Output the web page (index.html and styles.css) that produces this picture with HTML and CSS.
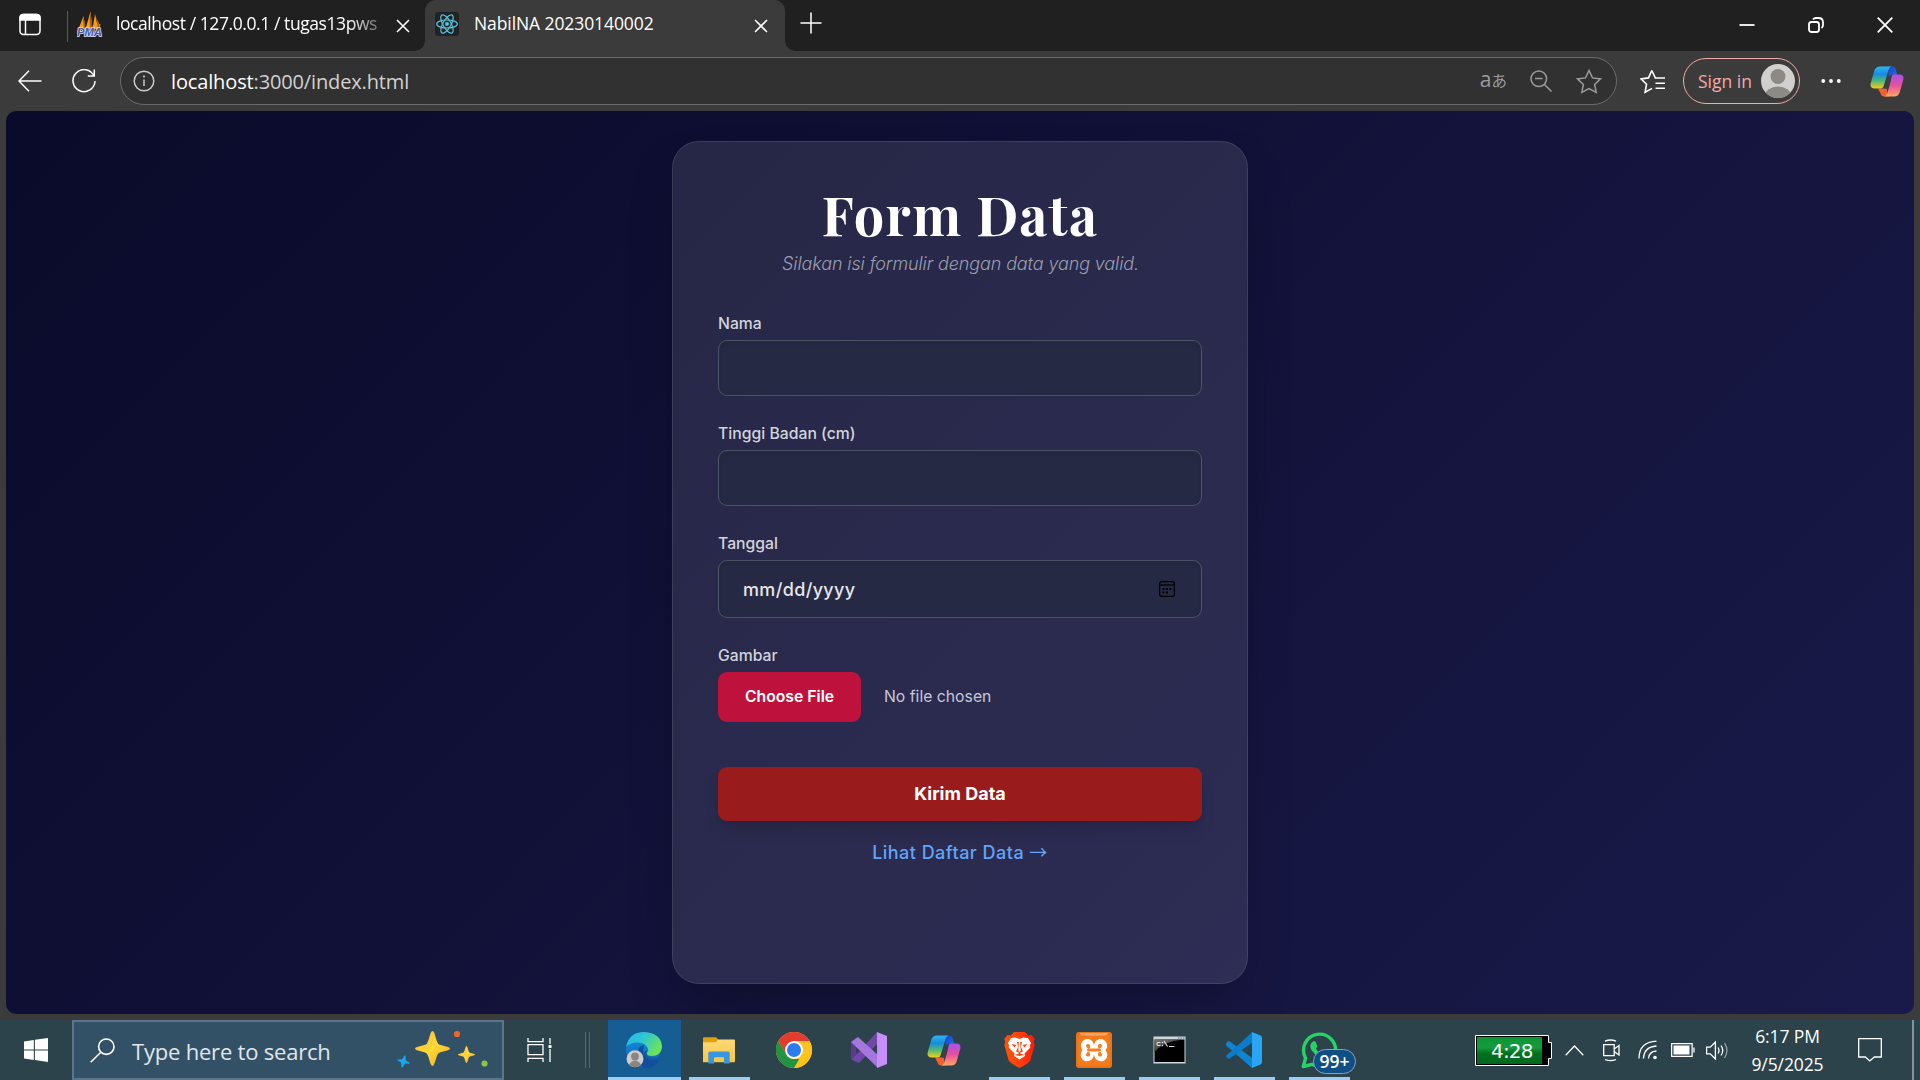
FILE: index.html
```html
<!DOCTYPE html>
<html lang="id">
<head>
<meta charset="utf-8">
<title>NabilNA 20230140002</title>
<link rel="stylesheet" href="styles.css">
</head>
<body>
<svg class="defs" width="0" height="0">
  <defs>
    <linearGradient id="cpA" x1="0" y1="0" x2="0" y2="1"><stop offset="0" stop-color="#2fb6f0"/><stop offset=".35" stop-color="#168be0"/><stop offset=".65" stop-color="#4fb878"/><stop offset="1" stop-color="#f6cf16"/></linearGradient>
    <linearGradient id="cpB" x1="0" y1="0" x2="0" y2="1"><stop offset="0" stop-color="#a650ee"/><stop offset=".5" stop-color="#e8509c"/><stop offset="1" stop-color="#ffa763"/></linearGradient>
    <linearGradient id="cpC" x1="0" y1="0" x2="1" y2="1"><stop offset="0" stop-color="#1a3fc4"/><stop offset="1" stop-color="#2273e4"/></linearGradient>
    <linearGradient id="edA" x1="0" y1="0" x2="1" y2=".5"><stop offset="0" stop-color="#2bb0f0"/><stop offset=".5" stop-color="#2fc8cf"/><stop offset="1" stop-color="#6be35a"/></linearGradient>
    <linearGradient id="edB" x1="0" y1="0" x2="0" y2="1"><stop offset="0" stop-color="#1593e0"/><stop offset="1" stop-color="#0b62bd"/></linearGradient>
    <linearGradient id="fold" x1="0" y1="0" x2="0" y2="1"><stop offset="0" stop-color="#ffd978"/><stop offset="1" stop-color="#f8c63f"/></linearGradient>
    <linearGradient id="brv" x1="0" y1="0" x2="1" y2="0"><stop offset="0" stop-color="#ff5500"/><stop offset=".6" stop-color="#ff3a10"/><stop offset="1" stop-color="#ff1a00"/></linearGradient>
    <linearGradient id="gold" x1="0" y1="0" x2="1" y2="1"><stop offset="0" stop-color="#ffb52c"/><stop offset=".5" stop-color="#ffd83a"/><stop offset="1" stop-color="#f5a21f"/></linearGradient>
    <linearGradient id="term" x1="0" y1="0" x2=".6" y2="1"><stop offset="0" stop-color="#777"/><stop offset="1" stop-color="#222"/></linearGradient>
    <symbol id="copilot" viewBox="0 0 34 31">
      <path fill="url(#cpC)" d="M18 .5h4.500q2.500 0 3.200 2.700L27 8.500h-5q-2.500 0-3.300 2.600z"/>
      <path fill="#f0612f" d="M8 22.500h5q2.500 0 3.200-2.400l1.500 7.500q.5 2.500 2 2.900H14q-2.500 0-3.200-2.600z"/>
      <path fill="url(#cpA)" d="M10 .5h11.500q-2.200.8-3 3.500l-4.800 16q-.8 2.500-3.200 2.500H4.800Q-.6 22.500.8 17L4.200 5Q5.500.5 10 .5z"/>
      <path fill="url(#cpB)" d="M22.500 8.500h6.700q5.400 0 4 5.500L29.800 26q-1.300 4.500-5.800 4.500h-9.500q2.200-.8 3-3.500l4-15.700q.3-1.500 1-2.800z"/>
      <path fill="#3b4046" d="M16.500 12.500h4.800l-2.500 9.300q-.4.900-1.300.9H14z"/>
    </symbol>
    <symbol id="spark" viewBox="-10 -10 20 20"><path d="M0-10C1.500-10 2-3.500 3.500-2.500S10-1.300 10 0 5 1.600 3.500 2.700 1.500 10 0 10-2 3.700-3.500 2.700-10 1.300-10 0-5-1.500-3.500-2.500-1.500-10 0-10z"/></symbol>
  </defs>
</svg>

<header class="tabbar">
  <span class="workspaces"><svg width="22" height="23" viewBox="0 0 22 23" fill="none" stroke="#fff" stroke-width="1.500"><rect x="1" y="1.500" width="20" height="20" rx="3.500"/><path fill="#fff" d="M1 7V4.500Q1 1.500 4.500 1.500h13Q21 1.500 21 4.500V7z"/><path d="M6.500 7v14"/></svg></span>
  <div class="tab">
    <svg width="26" height="26" viewBox="0 0 26 26"><path fill="#f89c1c" d="M1.500 18L6.500 5l2 13zM8.500 18L13.500.500l2 17.500zM15.500 18l2.500-15 2 9 3.500 1.500-1 4.500z"/><path fill="#a9590c" d="M6 9l.5-4 2 13H7zM12.500 8l1-7.500 2 17.500h-2zM19 6l3 6 1 6h-2z"/><text class="pma" x="0" y="24.500" textLength="25" lengthAdjust="spacingAndGlyphs">PMA</text></svg>
    <span class="tab-title faded">localhost / 127.0.0.1 / tugas13pws</span>
    <svg class="tab-close" width="14" height="14" viewBox="0 0 14 14"><path d="M1 1l12 12M13 1L1 13"/></svg>
  </div>
  <div class="tab active">
    <svg width="24" height="24" viewBox="0 0 24 24"><rect width="24" height="24" rx="3" fill="#202225"/><g fill="none" stroke="#58c4dc" stroke-width="1.200"><ellipse cx="12" cy="12" rx="10.300" ry="4"/><ellipse cx="12" cy="12" rx="10.300" ry="4" transform="rotate(60 12 12)"/><ellipse cx="12" cy="12" rx="10.300" ry="4" transform="rotate(120 12 12)"/></g><circle cx="12" cy="12" r="2" fill="#58c4dc"/></svg>
    <span class="tab-title">NabilNA 20230140002</span>
    <svg class="tab-close" width="14" height="14" viewBox="0 0 14 14"><path d="M1 1l12 12M13 1L1 13"/></svg>
  </div>
  <svg class="newtab" width="22" height="22" viewBox="0 0 22 22"><path d="M11 .5v21M.5 11h21"/></svg>
  <div class="winctl">
    <svg width="16" height="16" viewBox="0 0 16 16"><path d="M.5 8h15"/></svg>
    <svg width="16" height="16" viewBox="0 0 16 16"><rect x="1" y="5" width="10" height="10" rx="2.500"/><path d="M5 2.500Q6 1 8 1h2.500Q15 1 15 5.500V8q0 2-1.500 3"/></svg>
    <svg width="16" height="16" viewBox="0 0 16 16"><path d="M.7.700l14.600 14.600M15.300.700L.7 15.300"/></svg>
  </div>
</header>

<nav class="toolbar">
  <svg class="back" width="24" height="22" viewBox="0 0 24 22"><path d="M23.500 11H1M11 .8L1 11l10 10.200"/></svg>
  <svg class="reload" width="24" height="24" viewBox="0 0 24 24"><path d="M22 7A11 11 0 1 0 23 12M22.300.500V7h-6.500"/></svg>
  <div class="address">
    <svg width="22" height="22" viewBox="0 0 22 22"><circle cx="11" cy="11" r="9.800"/><path d="M11 9.500V16"/><circle class="dot" cx="11" cy="6.500" r="1.100"/></svg>
    <span class="url">localhost<span>:3000/index.html</span></span>
    <span class="translate"><b>a</b>あ</span>
    <svg class="zoomout" width="22" height="22" viewBox="0 0 22 22"><circle cx="8.800" cy="8.800" r="7.800"/><path d="M14.500 14.500l7 7M5 8.500h7.600"/></svg>
    <svg width="26" height="25" viewBox="0 0 26 25"><path d="M13 1.500l3.500 7.400 8 1-5.900 5.500 1.600 8L13 19.500l-7.200 3.900 1.600-8L1.500 9.900l8-1z"/></svg>
  </div>
  <svg class="favs" width="26" height="25" viewBox="0 0 26 25"><path d="M11.800 1.500L8.500 8.900l-7.500 1 5.500 5.400-1.400 8 7-3.900M14.500 9H25M15.500 14.200H25M15.500 19.200H25M11.800 1.500l3.500 7.300"/></svg>
  <div class="signin"><span>Sign in</span>
    <svg width="34" height="34" viewBox="0 0 34 34"><clipPath id="av"><circle cx="17" cy="17" r="17"/></clipPath><g clip-path="url(#av)"><rect width="34" height="34" fill="#d2d0ce"/><circle cx="17" cy="12.500" r="7.500" fill="#8d8984"/><ellipse cx="17" cy="32" rx="13" ry="9.500" fill="#8d8984"/></g></svg>
  </div>
  <svg class="dots" width="20" height="6" viewBox="0 0 20 6" fill="#fff"><circle cx="2.200" cy="3" r="1.900"/><circle cx="10" cy="3" r="1.900"/><circle cx="17.800" cy="3" r="1.900"/></svg>
  <svg class="cop" width="34" height="31"><use href="#copilot"/></svg>
</nav>

<div class="viewport">
  <main class="page">
    <form class="card">
      <h1>Form Data</h1>
      <p class="lead">Silakan isi formulir dengan data yang valid.</p>
      <div class="field"><label>Nama</label><div class="input"></div></div>
      <div class="field"><label>Tinggi Badan (cm)</label><div class="input"></div></div>
      <div class="field"><label>Tanggal</label>
        <div class="input date"><span>mm/dd/yyyy</span>
          <svg width="16" height="16" viewBox="0 0 16 16" fill="none" stroke="#000" stroke-width="1.200"><rect x=".6" y=".6" width="14.800" height="14.800" rx="2.200"/><path d="M.6 4h14.800"/><g fill="#000" stroke="none"><rect x="3.500" y="7" width="2" height="2"/><rect x="7" y="7" width="2" height="2"/><rect x="10.500" y="7" width="2" height="2"/><rect x="3.500" y="10.500" width="2" height="2"/><rect x="7" y="10.500" width="2" height="2"/></g></svg>
        </div></div>
      <div class="field"><label>Gambar</label>
        <div class="file"><span class="choose">Choose File</span><span class="nofile">No file chosen</span></div></div>
      <button class="submit" type="button">Kirim Data</button>
      <a class="link">Lihat Daftar Data <span>→</span></a>
    </form>
  </main>
</div>

<footer class="taskbar">
  <div class="start"><svg width="24" height="24" viewBox="0 0 24 24" fill="#fff"><path d="M0 3.400L9.800 2v9.400H0zM10.900 1.800L24 0v11.400H10.900zM0 12.500h9.800v9.400L0 20.600zM10.900 12.500H24V24l-13.100-1.900z"/></svg></div>
  <div class="search">
    <svg width="25" height="25" viewBox="0 0 25 25"><circle cx="16.300" cy="8.700" r="7.700"/><path d="M10.800 14.300L.7 24.300"/></svg>
    <span>Type here to search</span>
    <svg class="sparks" width="94" height="38" viewBox="0 0 94 38"><use href="#spark" x="18" y="1" width="35" height="35" fill="url(#gold)"/><use href="#spark" x="61" y="16" width="17" height="17" fill="url(#gold)"/><use href="#spark" x="0" y="25" width="13" height="13" fill="#16a8ee" transform="rotate(15 6.500 31.500)"/><circle cx="60" cy="4" r="3.100" fill="#f2662b"/><circle cx="87.500" cy="33.500" r="3.100" fill="#8cc63f"/></svg>
  </div>
  <div class="taskview"><svg width="25" height="24" viewBox="0 0 25 24"><path d="M1 0v3.700h15V0M1 24v-3.700h15V24M1 6.700h15v10H1zM23 0v6M23 11v13"/><path class="fill" d="M21.500 7h3v3h-3z"/></svg></div>
  <div class="grip"></div>
  <div class="apps">
    <div class="app current"><svg width="36" height="36" viewBox="0 0 36 36"><circle cx="17" cy="18" r="17" fill="url(#edB)"/><path fill="#114e9e" d="M12 20q0-6 6-7-3 10 4 13t12 1q-5 9-15 9-7-3-7-16z"/><path fill="#155d92" d="M21 18q-2 5 3 7 5 2 12-1v3q-12 3-17-2-3-4 2-7z"/><path fill="url(#edA)" d="M0 15Q3 0 18 0q17 1 18 14 0 10-11 10-5-.5-4-3.500 2-2 1-4-3-7-12-6Q3 11 0 15z"/><circle cx="9" cy="26.800" r="8.500" fill="#cfcdcb"/><circle cx="9" cy="24.500" r="3.900" fill="#8b8681"/><path fill="#8b8681" d="M3 33q2-4.500 6-4.500t6 4.500q-2.500 2.300-6 2.300T3 33z"/></svg></div>
    <div class="app open"><svg width="32" height="27" viewBox="0 0 32 27"><path fill="#e09f0b" d="M0 1.500Q0 .3 1.200.3h12l2 2.200-2 4H0z"/><path fill="url(#fold)" d="M0 5.200h12.500l2.500-2.700h16q1 0 1 1v20.700q0 1-1 1H0z"/><path fill="#3a96e0" d="M5.300 26.500V16q0-1.500 1.500-1.500h18.400q1.500 0 1.500 1.500v10.500H21v-5.300q0-1-1-1h-8q-1 0-1 1v5.300z"/></svg></div>
    <div class="app"><svg width="36" height="36" viewBox="0 0 36 36"><circle cx="18" cy="18" r="18" fill="#fcc31e"/><path fill="#e33b2e" d="M2.400 9A18 18 0 0 1 33.600 9H18L10.200 22.500z"/><path fill="#229342" d="M2.400 9L10.200 22.500Q13 27 18 27h7.800L18 36A18 18 0 0 1 2.400 9z"/><path fill="#fcc31e" d="M33.600 9A18 18 0 0 1 18 36l7.800-13.500L27 9z"/><circle cx="18" cy="18" r="9" fill="#fff"/><circle cx="18" cy="18" r="7" fill="#2b7de9"/></svg></div>
    <div class="app"><svg width="36" height="36" viewBox="0 0 36 36"><path fill="#5d3a92" d="M0 10l6-4.500v6.500L5 18l1 5v7.500L0 27z"/><path fill="#7048a8" d="M26 0v12L8 31 1 27.500z"/><path fill="#a577de" d="M0 10l7-5 20 18v13z"/><path fill="#c78ef8" d="M26 0l10 4v28l-10 4z"/></svg></div>
    <div class="app"><svg width="34" height="31"><use href="#copilot"/></svg></div>
    <div class="app open"><svg width="31" height="36" viewBox="0 0 31 36"><path fill="url(#brv)" d="M10 0h11l3.200 3.500L27.500 3l3.200 4-1 3 1 3-4.400 15.500Q25 31 15.500 36 6 31 4.700 28.500L.3 13l1-3-1-3 3.200-4 3.300.5z"/><path fill="#fff" d="M15.500 7l4-1.500 4.500.5 3 5-1 2 .3 2.500-5.800 6 .5 2.500-5.500 3.500-5.500-3.500.5-2.500-5.800-6L5 13l-1-2 3-5 4.500-.5z"/><path fill="#ff4510" d="M7.500 12l5 1-2 2.500zM23.500 12l-5 1 2 2.500zM13 10h5l-1 5 2 4.500-3.500 1.500-3.500-1.500 2-4.500zM11 23l4.500-2 4.500 2-4.500 1z"/><path fill="#fff" d="M14.800 10h1.400l.5 9-1.200 1-1.200-1z"/></svg></div>
    <div class="app open"><svg width="36" height="36" viewBox="0 0 36 36"><rect width="36" height="36" rx="3" fill="#ea7316"/><path fill="#f6a86c" d="M4 1h28q-1 3-4 3H8Q5 4 4 1z"/><rect x="2" y="3" width="32" height="31" rx="2" fill="#fa7f24" opacity=".6"/><path fill="none" stroke="#fff" stroke-width="5" stroke-linecap="round" stroke-linejoin="round" d="M14.500 16h7M14.500 20h7M10 18q-3-2-2.500-5.500 1.500-3.500 5-3 3 1 3 5M26 18q3-2 2.500-5.500-1.500-3.500-5-3-3 1-3 5M10 18q-3.500 3-2.500 6.500 2 3 5 2 3-1 3-5M26 18q3.500 3 2.500 6.500-2 3-5 2-3-1-3-5"/><path stroke="#fa7f24" stroke-width="3" stroke-linecap="round" d="M12.500 13.500v1.500M23.500 13.500v1.500M12.500 18h11M12.500 21.500v1.500M23.500 21.500v1.500"/></svg></div>
    <div class="app open"><svg width="33" height="28" viewBox="0 0 33 28"><rect x=".5" y=".5" width="32" height="27" fill="#cfd6dc"/><rect x="1.500" y="3.500" width="30" height="22.500" fill="#000"/><path fill="url(#term)" d="M1.500 3.500h29q-21 2-29 13z"/><path stroke="#4867a8" d="M25 2h1.500M27.500 2H29M30 2h1.500"/><path fill="none" stroke="#ddd" stroke-width="1.200" d="M7.500 6.500H5q-1 0-1 1.500t1 1.500h2.500M9.500 6v1.200M9.500 9v1.200M11 5l3.500 5.500M16 10.500h5.500"/></svg></div>
    <div class="app open"><svg width="36" height="36" viewBox="0 0 36 36"><path fill="#0c6cb4" d="M0 24l1.500 2q1 1 2.500 0L27 10V0z"/><path fill="#0f85d2" d="M4 9.500q-1.500-1-2.500.3L0 11.500Q-.5 13 .7 14L26 36V26z"/><path fill="#0b7cc9" d="M0 24L26 .5 27 10 4 26.300q-1.500 1-2.500-.2z"/><path fill="#2aa5f3" d="M26 0l8.500 3.500Q36 4.200 36 6v24q0 1.800-1.500 2.500L26 36z"/></svg></div>
    <div class="app open"><svg width="37" height="37" viewBox="0 0 37 37"><path fill="none" stroke="#25d366" stroke-width="3.400" stroke-linejoin="round" d="M2.300 34.500L4.600 26A16 16 0 1 1 11 32.300z"/><path fill="#25d366" d="M12 9.500q1.500-1 2.500.3l1.800 4q.2 1-1.500 2.700 2.500 4.500 6.700 6.300l2-2.300q.6-.6 1.300-.2l4 2q.5 4.500-5 5.200-4 .5-9.500-5-5.500-5.500-5-9 .4-2.800 2.700-4z"/></svg><span class="badge">99+</span></div>
  </div>
  <div class="tray">
    <svg class="meter" width="77" height="31" viewBox="0 0 77 31"><linearGradient id="gr" x1="0" y1="0" x2="0" y2="1"><stop offset="0" stop-color="#0d9436"/><stop offset=".4" stop-color="#149c3c"/><stop offset=".6" stop-color="#00711f"/><stop offset="1" stop-color="#006a1c"/></linearGradient><path fill="#000" stroke="#fff" d="M.5.500h73v7h3v16h-3v7H.5z"/><rect x="2" y="2" width="65" height="27" fill="url(#gr)"/><text x="16" y="22.500">4:28</text></svg>
    <div class="slot s1"><svg width="19" height="11" viewBox="0 0 19 11"><path d="M.7 10.200L9.500 1l8.800 9.200"/></svg></div>
    <div class="slot s2"><svg width="17" height="23" viewBox="0 0 17 23"><path d="M.7 5.700h10.500v11H.7zM11.200 10l4.800-3.500v9.500L11.200 12.500M2 2.200Q7.500-.2 13 2.200M2 20.500q5.500 2.400 11 0"/></svg></div>
    <div class="slot"><svg width="20" height="20" viewBox="0 0 20 20"><path d="M1 18.500Q1 2 18.500 1.200M5.500 18.500Q6 7 18.500 6M10.500 18.500Q11 11.500 18.500 11" /><circle cx="17" cy="17.500" r="1.800" class="fill"/></svg></div>
    <div class="slot"><svg width="24" height="14" viewBox="0 0 24 14"><path d="M.6.700h20.500v12.600H.6zM23 4.500v5"/><path class="fill" d="M2.500 2.500h16v9h-16z"/></svg></div>
    <div class="slot"><svg width="23" height="19" viewBox="0 0 23 19"><path d="M.6 6.200h3.700L9.400 1v17l-5.100-5.200H.6zM12 6.500q2 3 0 6M15 4.500q3.500 5 0 10"/><path opacity=".5" d="M18.500 2q5 7.500 0 15"/></svg></div>
    <div class="clock"><span>6:17 PM</span><span>9/5/2025</span></div>
    <div class="slot s3"><svg width="24" height="24" viewBox="0 0 24 24"><path d="M.7.700h22.600v18.300h-7L11.800 23l-4.500-4H.7z"/></svg></div>
    <div class="desk"></div>
  </div>
</footer>
</body>
</html>
```

FILE: styles.css
```css
* { box-sizing: border-box; }
html, body { margin: 0; height: 100%; }
body { width: 1920px; height: 1080px; overflow: hidden; display: flex; flex-direction: column; background: #3b3b3b; color: #fff; font-family: "Open Sans", "Noto Sans", "Noto Sans CJK JP", sans-serif; }
svg { display: block; flex: none; }
.defs { position: absolute; }

.tabbar { height: 51px; flex: none; display: flex; background: #202020; }
.workspaces { width: 68px; padding: 13px 0 0 19px; position: relative; }
.workspaces::after { content: ""; position: absolute; right: 0; top: 11px; width: 1px; height: 31px; background: #5c5c5c; }
.tab { display: flex; align-items: center; width: 357px; padding: 0 15px 3px 9px; }
.tab-title { font-size: 17.5px; white-space: nowrap; letter-spacing: -.09px; margin-left: 13px; padding-bottom: 2px; }
.tab .faded { width: 270px; letter-spacing: -.42px; -webkit-mask-image: linear-gradient(90deg, #000 86%, transparent 103%); mask-image: linear-gradient(90deg, #000 86%, transparent 103%); }
.tab-close { margin-left: auto; margin-top: 3px; fill: none; stroke: #fff; stroke-width: 1.6; }
.active { width: 360px; padding: 0 17px 3px 10px; background: #3b3b3b; border-radius: 11px 11px 0 0; position: relative; }
.active .tab-title { margin-left: 15px; }
.active::before, .active::after { content: ""; position: absolute; bottom: 0; width: 10px; height: 10px; }
.active::before { left: -10px; background: radial-gradient(circle at 0 0, transparent 9.500px, #3b3b3b 10px); }
.active::after { right: -10px; background: radial-gradient(circle at 100% 0, transparent 9.500px, #3b3b3b 10px); }
.newtab { margin: 12px 0 0 15px; fill: none; stroke: #fff; stroke-width: 1.5; }
.winctl { margin: 17px 27px 0 auto; display: flex; gap: 53px; }
.winctl svg { fill: none; stroke: #fff; stroke-width: 1.8; }
.pma { font: italic bold 10px "Liberation Sans", sans-serif; fill: #4556a2; stroke: #e3e6f5; stroke-width: 1.4px; paint-order: stroke; }

.toolbar { height: 60px; flex: none; display: flex; align-items: center; }
.back, .reload { fill: none; stroke: #fff; stroke-width: 1.5; }
.back { margin-left: 18px; }
.reload { margin-left: 30px; }
.address { margin-left: 24px; width: 1497px; height: 48px; border: 1px solid #6b6b6b; border-radius: 24px; background: #313131; display: flex; align-items: center; padding: 0 14px 0 12px; }
.address svg { fill: none; stroke: #9b9b9b; stroke-width: 1.5; }
.address svg:first-child { stroke: #c9c9c9; }
.address .dot { fill: #c9c9c9; stroke: none; }
.url { margin-left: 16px; font-size: 20px; letter-spacing: -.14px; }
.url span { color: #d2d2d2; }
.translate { margin-left: auto; color: #9b9b9b; font-size: 15.5px; display: flex; align-items: baseline; padding-bottom: 2px; }
.translate b { font-weight: 400; font-size: 21px; line-height: 20px; }
.zoomout { margin: 0 24px 0 23px; }
.favs { margin-left: 23px; fill: none; stroke: #fff; stroke-width: 1.6; }
.signin { margin-left: 17px; width: 117px; height: 46px; border: 1.500px solid #f4aaa6; border-radius: 23px; display: flex; align-items: center; justify-content: space-between; padding: 0 4px 0 14px; color: #f4aaa6; font-size: 17.5px; }
.dots { margin-left: 21px; }
.cop { margin-left: 29px; }

.viewport { flex: none; height: 909px; padding: 0 6px 6px; }
.page { height: 903px; border-radius: 10px; background: linear-gradient(135deg, #0a0a2a, #1a1a4a); padding-top: 30px; display: flex; justify-content: center; align-items: flex-start; overflow: hidden; font-family: Inter, sans-serif; }
.card { width: 576px; height: 843px; border: 1px solid rgba(120,130,135,.25); border-radius: 27px; background: rgba(255,255,255,.1); box-shadow: 0 28px 56px -14px rgba(0,0,0,.28); padding: 42px 45px 0; display: flex; flex-direction: column; }
h1 { margin: 0; height: 61px; text-align: center; font: 700 54px/61px "Playfair Display", "Liberation Serif", serif; letter-spacing: 1.35px; white-space: nowrap; }
.lead { margin: 5px 0 36px; height: 27px; line-height: 27px; text-align: center; font-size: 18px; font-weight: 300; font-style: italic; color: #9a9fad; white-space: nowrap; letter-spacing: -.12px; padding-left: 1px; }
.field { display: flex; flex-direction: column; margin-bottom: 27px; }
label { font-size: 15.750px; font-weight: 500; line-height: 22px; height: 27px; color: #d1d5db; }
.input { height: 56px; border: 1px solid #4b5565; border-radius: 9px; background: #252943; box-shadow: inset 0 2px 4px rgba(0,0,0,.06); }
.date { height: 58px; display: flex; align-items: center; justify-content: space-between; padding: 0 26px 0 24px; font-size: 18px; font-weight: 500; letter-spacing: .35px; color: #e5e7eb; }
.date svg { margin-bottom: 1px; }
.file { display: flex; align-items: center; font-size: 15.750px; color: #c5c8d2; }
.choose { width: 143px; height: 50px; line-height: 49px; text-align: center; background: #be123c; border-radius: 9px; color: #fff; font-weight: 600; margin-right: 23px; }
.nofile { padding-bottom: 1px; }
.submit { margin: 18px 0 0; height: 54px; padding: 0 0 2px; border: 0; border-radius: 9px; background: #991b1b; color: #fff; font: 700 18px Inter, sans-serif; box-shadow: 0 11px 17px -3px rgba(0,0,0,.12), 0 4px 7px -3px rgba(0,0,0,.12); }
.link { margin-top: 18px; height: 27px; text-align: center; font-size: 18px; line-height: 27px; font-weight: 500; letter-spacing: .47px; color: #60a5fa; }
.link span { font-family: "Noto Sans CJK JP", sans-serif; font-weight: 400; line-height: 20px; }

.taskbar { height: 60px; flex: none; display: flex; background: #2c434b; }
.start { width: 72px; padding: 18px 0 0 24px; }
.search { width: 432px; border: 2px solid #5c758b; background: #335166; display: flex; align-items: center; padding-left: 16px; }
.search svg:first-child { fill: none; stroke: #fff; stroke-width: 1.6; }
.search span { margin: 2px 0 0 17px; font-size: 22px; color: #e2e6ea; white-space: nowrap; letter-spacing: -.2px; }
.search .sparks { margin: 0 11px 2px auto; }
.taskview { width: 81px; padding: 18px 0 0 23px; }
.taskview svg, .slot svg { fill: none; stroke: #fff; stroke-width: 1.3; }
.fill { fill: #fff; stroke: none; }
.grip { width: 5px; height: 36px; margin: 12px 17px 0 0; border: solid #56686f; border-width: 0 1px; }
.apps { display: flex; }
.app { width: 75px; height: 60px; display: flex; align-items: center; justify-content: center; position: relative; padding-right: 1px; }
.open::after { content: ""; position: absolute; left: 7px; bottom: 0; width: 61px; height: 3px; background: #9cccf0; }
.current { width: 73px; margin: 0 1px; background: #155d92; border-bottom: 3px solid #9cccf0; padding-top: 3px; }
.badge { position: absolute; left: 31px; top: 29px; width: 43px; height: 25px; border: 1px solid #7fa3c0; border-radius: 13px; background: #0f4f86; text-align: center; font-size: 17.5px; line-height: 23px; font-weight: 600; z-index: 1; }
.tray { margin-left: auto; display: flex; align-items: center; }
.meter text { font: 20px "DejaVu Sans", sans-serif; fill: #fff; letter-spacing: -.8px; }
.slot { width: 35px; display: flex; justify-content: center; }
.s1 { width: 36px; margin-left: 4px; }
.s2 { width: 38px; }
.s3 { width: 60px; }
.clock { width: 105px; display: flex; flex-direction: column; align-items: center; font-size: 17.5px; line-height: 28px; letter-spacing: -.1px; padding-bottom: 1px; }
.desk { width: 2px; height: 60px; margin: 0 6px 0 12px; background: #84939a; }
```
